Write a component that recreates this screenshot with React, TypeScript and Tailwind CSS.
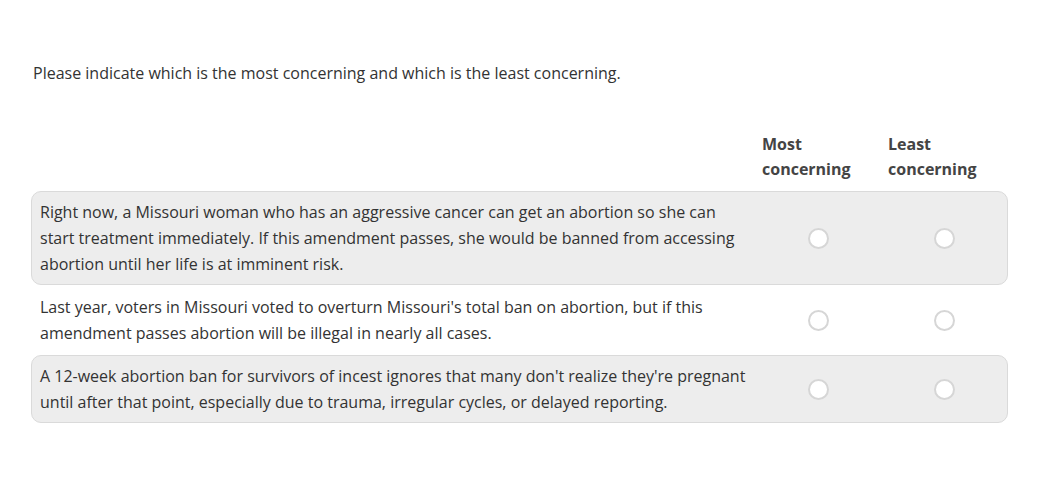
import React, { useState } from 'react';

const ROWS = [
  {
    text: "Right now, a Missouri woman who has an aggressive cancer can get an abortion so she can start treatment immediately. If this amendment passes, she would be banned from accessing abortion until her life is at imminent risk.",
    shaded: true,
  },
  {
    text: "Last year, voters in Missouri voted to overturn Missouri's total ban on abortion, but if this amendment passes abortion will be illegal in nearly all cases.",
    shaded: false,
  },
  {
    text: "A 12-week abortion ban for survivors of incest ignores that many don't realize they're pregnant until after that point, especially due to trauma, irregular cycles, or delayed reporting.",
    shaded: true,
  },
];

const Radio: React.FC<{ checked: boolean; onClick: () => void }> = ({ checked, onClick }) => (
  <button
    type="button"
    onClick={onClick}
    className="flex h-[21px] w-[21px] items-center justify-center rounded-full border-2 border-[#d6d6d6] bg-white"
  >
    {checked && <span className="h-[9px] w-[9px] rounded-full bg-[#555]" />}
  </button>
);

export default function App() {
  const [most, setMost] = useState<number | null>(null);
  const [least, setLeast] = useState<number | null>(null);

  return (
    <div className="min-h-screen bg-white text-[#333] font-['Open_Sans',sans-serif]">
      <div className="pl-[31px] pr-[53px] pt-[62px]">
        <p className="pl-[2px] text-[16px] leading-[22px]">
          Please indicate which is the most concerning and which is the least concerning.
        </p>

        <div className="mt-[48px] flex">
          <div className="w-[724px]" />
          <div className="w-[126px] pl-[7px] text-[16px] font-bold leading-[25px] text-[#444]">
            Most
            <br />
            concerning
          </div>
          <div className="w-[126px] pl-[7px] text-[16px] font-bold leading-[25px] text-[#444]">
            Least
            <br />
            concerning
          </div>
        </div>

        <div className="mt-[9px] flex flex-col gap-[1px]">
          {ROWS.map((row, i) => (
            <div
              key={i}
              className={
                row.shaded
                  ? 'flex items-center rounded-[10px] border border-[#dadada] bg-[#ededed] py-[7px]'
                  : 'flex items-center border border-transparent py-[7px]'
              }
            >
              <div className="w-[723px] pl-[8px] pr-[7px] text-[16px] leading-[26px]">{row.text}</div>
              <div className="flex w-[126px] justify-center">
                <Radio checked={most === i} onClick={() => setMost(i)} />
              </div>
              <div className="flex w-[126px] justify-center">
                <Radio checked={least === i} onClick={() => setLeast(i)} />
              </div>
            </div>
          ))}
        </div>
      </div>
    </div>
  );
}
